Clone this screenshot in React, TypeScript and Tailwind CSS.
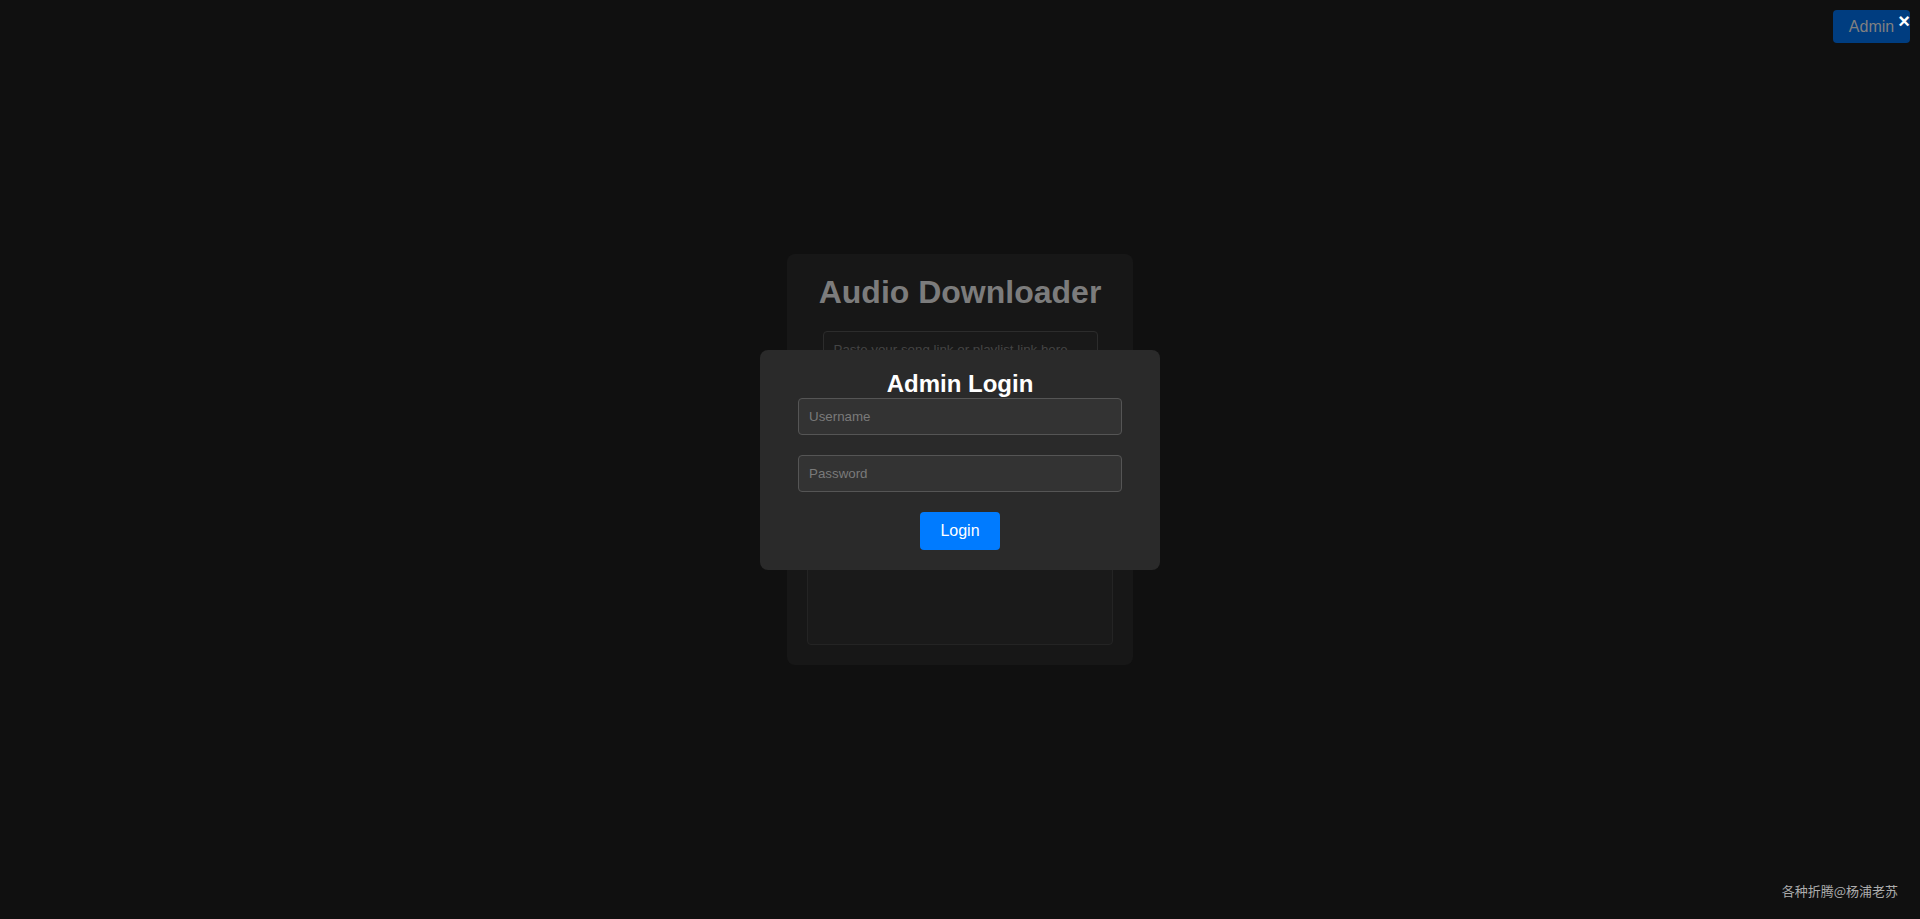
import React from "react";

export default function App() {
  return (
    <div
      className="relative h-[919px] w-full overflow-hidden bg-[#101010]"
      style={{ fontFamily: '"Liberation Sans", Arial, sans-serif' }}
    >
      {/* background card */}
      <div className="flex h-full items-center justify-center">
        <div className="flex h-[411px] w-[346px] flex-col rounded-lg bg-[#171717] p-5">
          <h1 className="text-center text-[32px] font-bold leading-[37px] text-[#7c7c7c]">
            Audio Downloader
          </h1>
          <input
            readOnly
            placeholder="Paste your song link or playlist link here..."
            className="mx-auto mt-5 h-[37px] w-[275px] rounded border border-[#2c2c2c] bg-[#191919] px-[10px] text-[13.33px] outline-none placeholder:text-[#444444]"
          />
          <div className="mt-5 flex justify-center">
            <div className="h-[38px] w-[100px] rounded bg-[#003d80]" />
          </div>
          <div className="mt-auto h-[200px] rounded border border-[#242424] bg-[#1a1a1a]" />
        </div>
      </div>

      {/* admin button (dimmed) */}
      <div className="absolute right-[10px] top-[10px] flex h-[33px] w-[77px] items-center justify-center rounded bg-[#003d80] text-[16px] text-[#808080]">
        Admin
      </div>

      {/* modal */}
      <div className="absolute inset-0 flex items-center justify-center">
        <div className="flex w-[400px] flex-col items-center rounded-lg bg-[#2a2a2a] p-5">
          <h2 className="text-[24px] font-bold leading-[28px] text-white">Admin Login</h2>
          <input
            placeholder="Username"
            className="h-[37px] w-[324px] rounded border border-[#555555] bg-[#333333] px-[10px] text-[13.33px] text-white outline-none placeholder:text-[#7a7a7a]"
          />
          <input
            type="password"
            placeholder="Password"
            className="mt-5 h-[37px] w-[324px] rounded border border-[#555555] bg-[#333333] px-[10px] text-[13.33px] text-white outline-none placeholder:text-[#7a7a7a]"
          />
          <button className="mt-5 h-[38px] w-[80px] rounded bg-[#007bff] text-[16px] text-white">
            Login
          </button>
        </div>
      </div>

      {/* close */}
      <div className="absolute right-[10px] top-[11px] text-[20px] font-bold leading-[20px] text-white">
        ×
      </div>

      {/* footer */}
      <div
        className="absolute bottom-[19px] right-[22px] text-[13px] leading-[18px] text-[#adadad]"
        style={{ fontFamily: '"Noto Sans CJK SC", "Liberation Sans", sans-serif' }}
      >
        各种折腾@杨浦老苏
      </div>
    </div>
  );
}
